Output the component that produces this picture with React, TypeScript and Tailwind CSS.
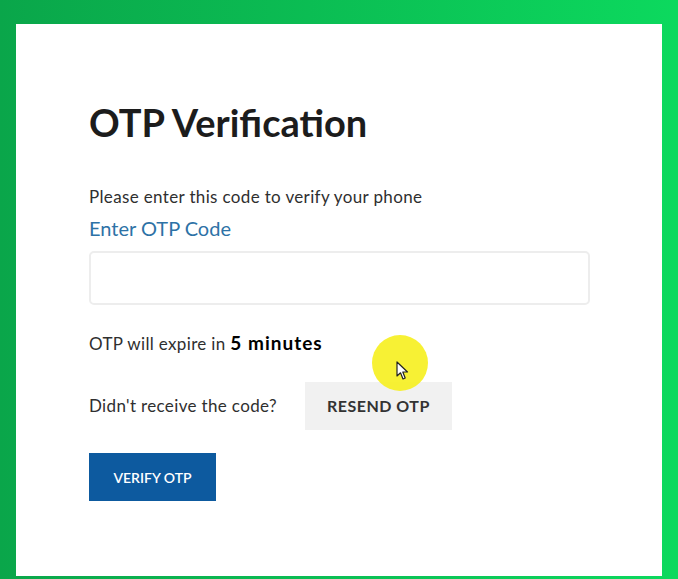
import { useState } from "react";

function CursorHighlight() {
  return (
    <div className="pointer-events-none absolute left-[356px] top-[311px] h-[56px] w-[56px] rounded-full bg-[#f6ef1e]/90">
      <svg
        className="absolute left-[24px] top-[26px]"
        width="14"
        height="20"
        viewBox="0 0 14 20"
      >
        <path
          d="M1 1 L1 15 L4.5 11.8 L7 18 L9.2 17 L6.8 11 L11.5 11 Z"
          fill="#fff"
          stroke="#222"
          strokeWidth="1.2"
          strokeLinejoin="round"
        />
      </svg>
    </div>
  );
}

function App() {
  const [otp, setOtp] = useState("");

  return (
    <div className="min-h-screen w-full bg-gradient-to-r from-[#0aa64a] to-[#0cd95e] pl-[16px] pr-[16px] pt-[24px] font-['Lato',sans-serif]">
      <div className="relative h-[552px] w-[646px] bg-white pl-[73px] pt-[76px]">
        <h1 className="text-[38px] font-bold leading-[44px] text-[#1c1c1c]">
          OTP Verification
        </h1>
        <p className="mt-[41px] text-[17px] leading-[24px] tracking-[0.35px] text-[#2f2f2f]">
          Please enter this code to verify your phone
        </p>
        <label
          htmlFor="otp_code"
          className="mt-[5px] block text-[20px] leading-[28px] text-[#2d72a6]"
        >
          Enter OTP Code
        </label>
        <input
          id="otp_code"
          type="text"
          value={otp}
          onChange={(e) => setOtp(e.target.value)}
          className="mt-[9px] block h-[54px] w-[501px] rounded-[5px] border-2 border-[#ededed] px-3 outline-none"
        />
        <p className="mt-[26px] text-[17px] leading-[24px] tracking-[0.35px] text-[#2f2f2f]">
          OTP will expire in{" "}
          <span className="text-[19px] font-bold tracking-[1px] text-black">
            5 minutes
          </span>
        </p>
        <div className="mt-[26px] flex items-center gap-[28px]">
          <span className="text-[17px] tracking-[0.35px] text-[#2f2f2f]">
            Didn't receive the code?
          </span>
          <button className="h-[48px] w-[147px] bg-[#f1f1f1] text-[16px] font-bold tracking-[0.5px] text-[#333]">
            RESEND OTP
          </button>
        </div>
        <button className="mt-[23px] h-[48px] w-[127px] bg-[#0d5a9f] text-[14px] font-semibold text-white">
          VERIFY OTP
        </button>
        <CursorHighlight />
      </div>
    </div>
  );
}

export default App;
